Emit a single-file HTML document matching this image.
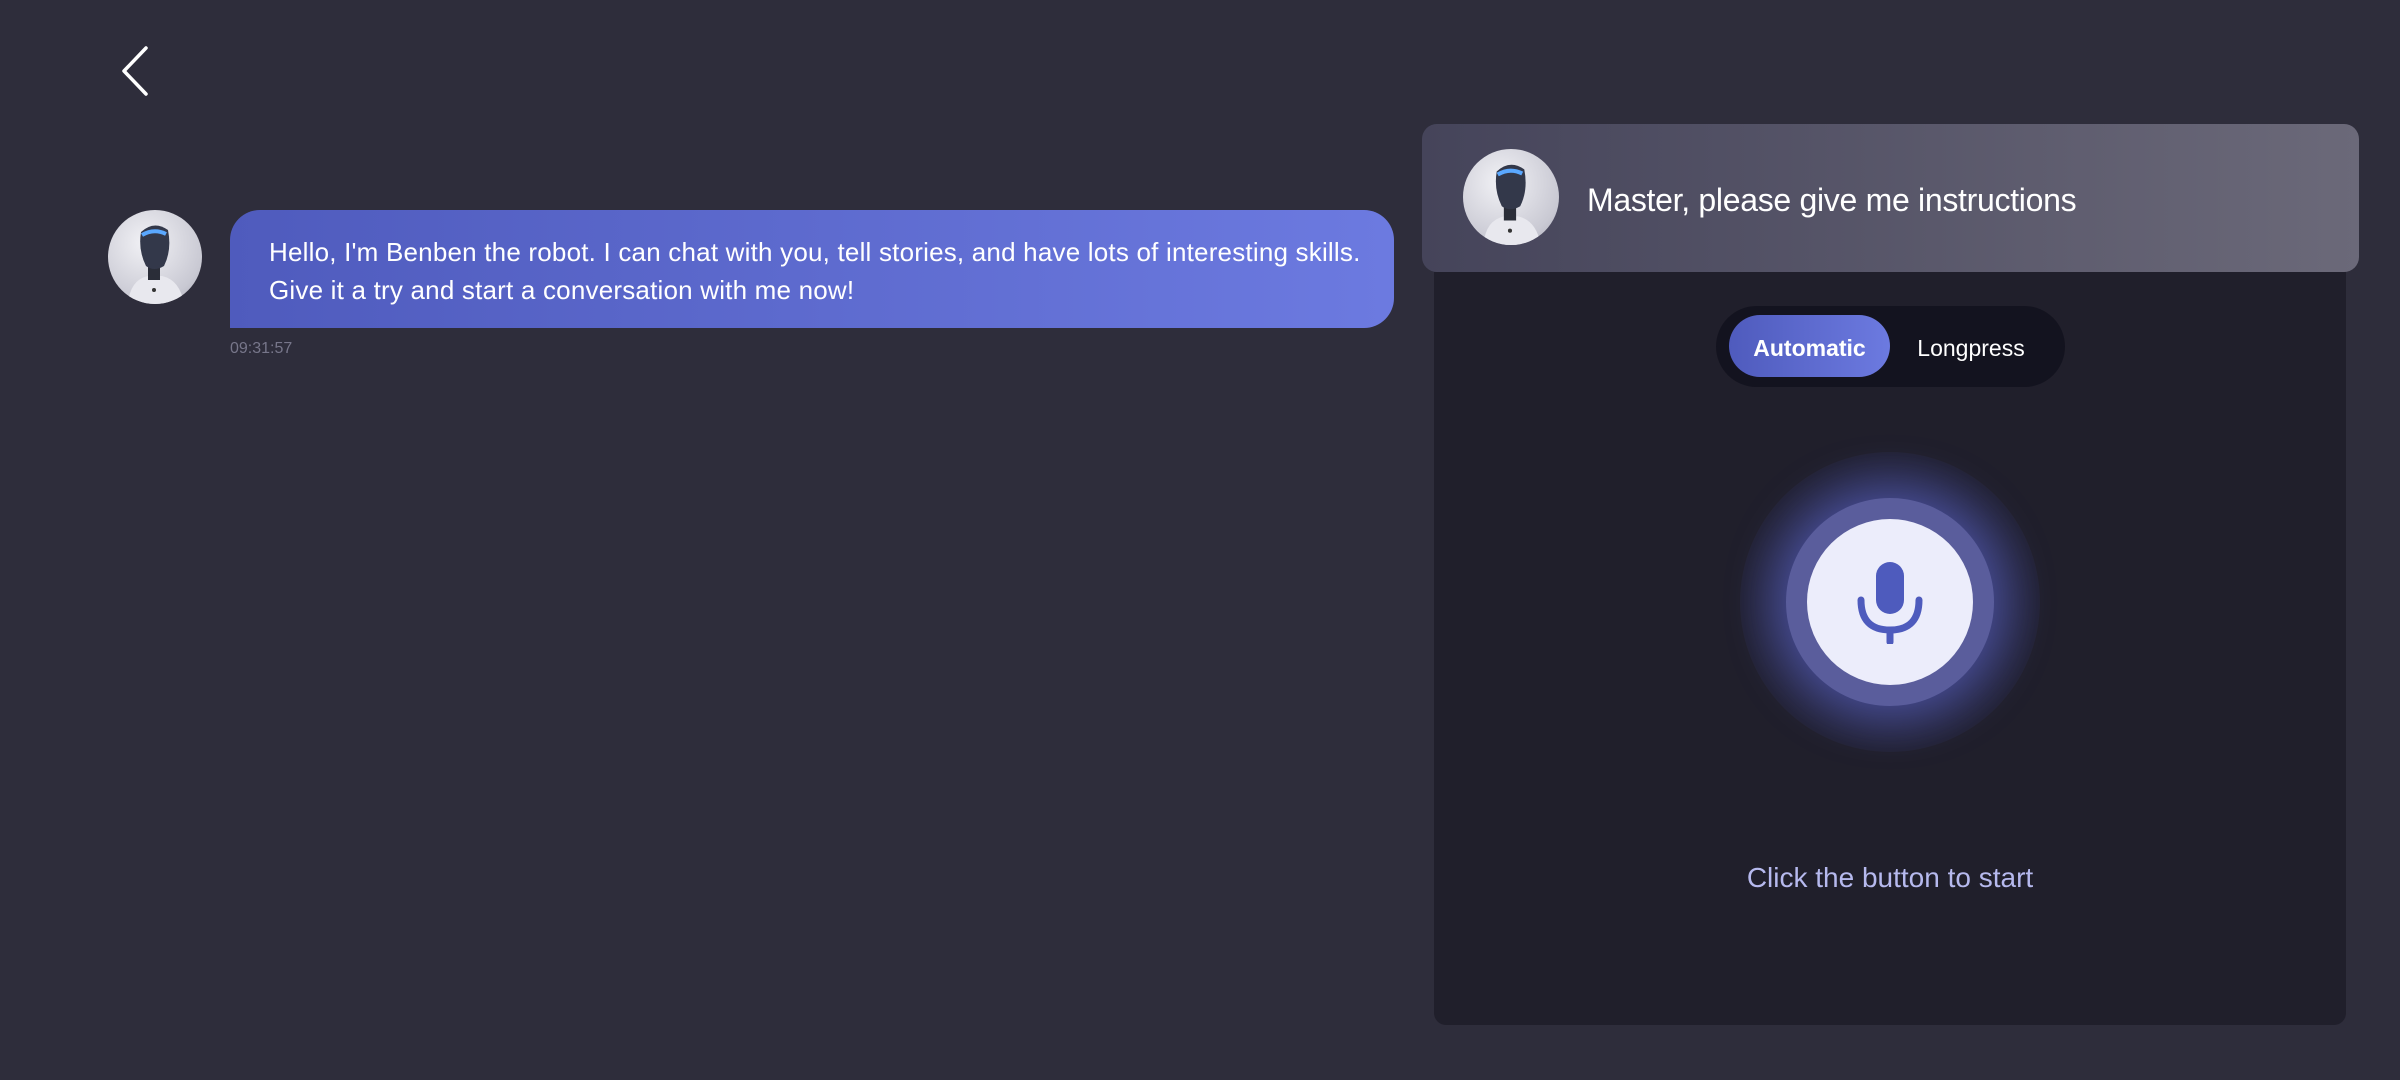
<!DOCTYPE html>
<html><head><meta charset="utf-8">
<style>
*{margin:0;padding:0;box-sizing:border-box}
body{width:2400px;height:1080px;background:#2e2d3b;position:relative;overflow:hidden;font-family:"Liberation Sans",sans-serif;color:#fff}
.abs{position:absolute}
.av{border-radius:50%;overflow:hidden;background:radial-gradient(circle at 40% 35%,#f2f2f6,#c9c9d3 70%,#a9a9b5)}
.bubble{left:230px;top:210px;width:1164px;height:118px;background:linear-gradient(90deg,#4f5bbd,#6c7ae0);border-radius:30px 30px 30px 0;padding:23px 0 0 39px;font-size:26px;line-height:38px;letter-spacing:0.2px}
.ts{left:230px;top:340px;font-size:16px;color:#77768a}
.top{left:1422px;top:124px;width:937px;height:148px;border-radius:15px;background:linear-gradient(90deg,#45445a,#6b6979)}
.panel{left:1434px;top:272px;width:912px;height:753px;background:#201f2b;border-radius:0 0 12px 12px}
.tog{left:1716px;top:306px;width:349px;height:81px;border-radius:41px;background:#13131f}
.pill{left:1729px;top:315px;width:161px;height:62px;border-radius:31px;background:linear-gradient(90deg,#4f5bbd,#6c7ae0);font-size:23px;line-height:66px;text-align:center;font-weight:bold}
.lp{left:1890px;top:315px;width:162px;height:62px;font-size:23px;line-height:66px;text-align:center}
.glow{left:1740px;top:452px;width:300px;height:300px;border-radius:50%;background:radial-gradient(circle,rgba(110,120,230,.6) 0%,rgba(90,100,210,.35) 40%,rgba(60,65,150,.1) 70%,rgba(32,31,43,0) 100%)}
.ring{left:1786px;top:498px;width:208px;height:208px;border-radius:50%;background:#5a5d9c;box-shadow:0 0 50px 10px rgba(100,110,225,.45)}
.btn{left:1807px;top:519px;width:166px;height:166px;border-radius:50%;background:#ecedfb}
.hint{left:1434px;top:862px;width:912px;text-align:center;font-size:28px;color:#b6b9ee}
</style></head><body>
<svg class="abs" style="left:118px;top:44px" width="34" height="54" viewBox="0 0 34 54"><path d="M28 4 L6 27 L28 50" fill="none" stroke="#fff" stroke-width="3.5" stroke-linecap="round" stroke-linejoin="round"/></svg>

<div class="abs av" style="left:108px;top:210px;width:94px;height:94px">
<svg width="94" height="94" viewBox="0 0 94 94"><path d="M20 94 Q22 70 40 66 L54 66 Q72 70 76 94Z" fill="#e8e8ee"/><rect x="40" y="52" width="12" height="18" fill="#2a2d38"/><path d="M33 22 Q46 10 60 20 Q64 40 56 56 Q46 62 38 56 Q30 40 33 22Z" fill="#33384a"/><path d="M34 25 Q46 18 58 24" stroke="#5aa8ff" stroke-width="4" fill="none"/><circle cx="46" cy="80" r="2" fill="#333"/></svg>
</div>
<div class="abs bubble">Hello, I'm Benben the robot. I can chat with you, tell stories, and have lots of interesting skills.<br>Give it a try and start a conversation with me now!</div>
<div class="abs ts">09:31:57</div>

<div class="abs panel"></div>
<div class="abs top"></div>
<div class="abs av" style="left:1463px;top:149px;width:96px;height:96px">
<svg width="96" height="96" viewBox="0 0 94 94"><path d="M20 94 Q22 70 40 66 L54 66 Q72 70 76 94Z" fill="#e8e8ee"/><rect x="40" y="52" width="12" height="18" fill="#2a2d38"/><path d="M33 22 Q46 10 60 20 Q64 40 56 56 Q46 62 38 56 Q30 40 33 22Z" fill="#33384a"/><path d="M34 25 Q46 18 58 24" stroke="#5aa8ff" stroke-width="4" fill="none"/><circle cx="46" cy="80" r="2" fill="#333"/></svg>
</div>
<div class="abs" style="left:1587px;top:180px;font-size:32px;line-height:40px;letter-spacing:-0.3px">Master, please give me instructions</div>

<div class="abs tog"></div>
<div class="abs pill">Automatic</div>
<div class="abs lp">Longpress</div>

<div class="abs glow"></div>
<div class="abs ring"></div>
<div class="abs btn"></div>
<svg class="abs" style="left:1850px;top:560px" width="80" height="84" viewBox="0 0 80 84"><rect x="26" y="2" width="28" height="52" rx="14" fill="#4e5bbd"/><path d="M11 40 Q11 70 40 70 Q69 70 69 40" fill="none" stroke="#4e5bbd" stroke-width="7" stroke-linecap="round"/><line x1="40" y1="70" x2="40" y2="82" stroke="#4e5bbd" stroke-width="7" stroke-linecap="round"/></svg>

<div class="abs hint">Click the button to start</div>
</body></html>
